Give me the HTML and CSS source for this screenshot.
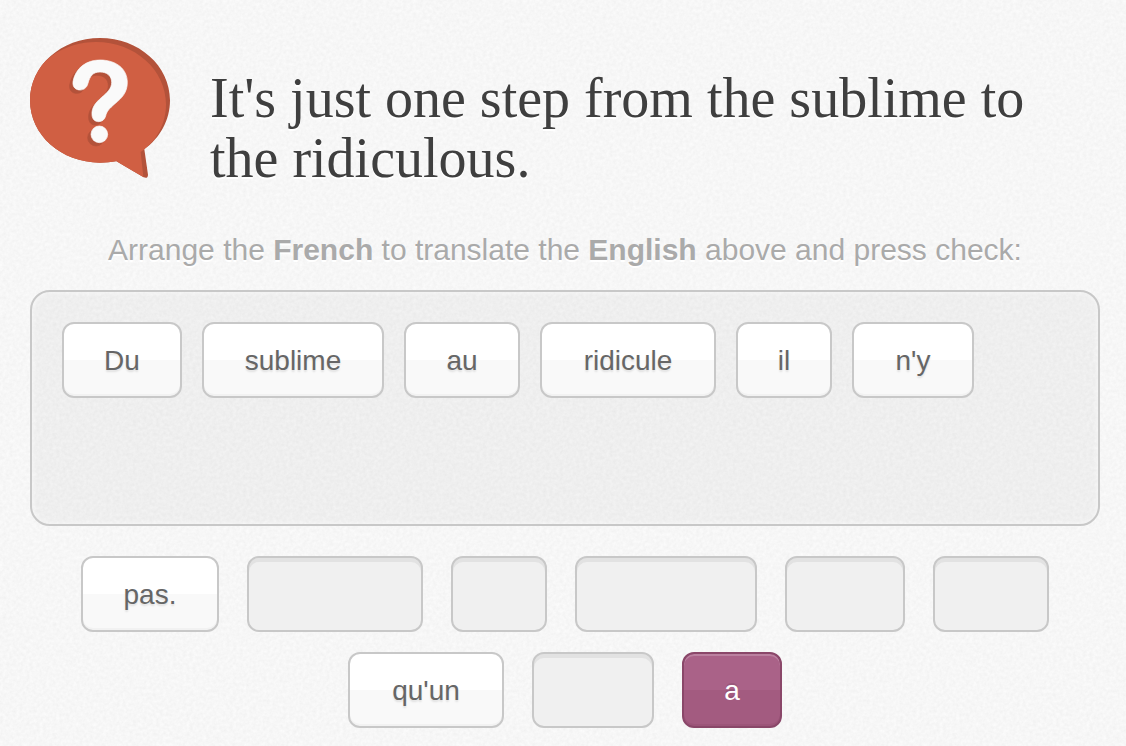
FILE: index.html
```html
<!DOCTYPE html>
<html lang="en">

<head>
    <meta charset="UTF-8">
    <meta name="viewport" content="width=device-width, initial-scale=1.0">
    <title>Translate the sentence</title>
    <link rel="stylesheet" href="styles.css">
</head>

<body>
    <main class="exercise">
        <header class="question">
            <svg class="question-icon" viewBox="30 39 420 420" aria-hidden="true">
                <defs>
                    <clipPath id="bubble">
                        <path d="M240 39C124 39 30 122 30 226C30 331 124 413 240 413Q266 413 289 409L371 457Q384 462 384 449L373 373C420 339 450 286 450 226C450 122 356 39 240 39Z" />
                    </clipPath>
                    <g id="mark" stroke-width="2">
                        <path d="M159 170C166 130 198 105 240 105C290 105 322 133 322 172C322 202 306 219 285 236C268 251 260 259 257 273C254 284 246 290 236 290C225 290 217 283 216 270C214 247 228 232 245 217C262 203 275 190 275 172C275 153 261 141 240 141C220 141 210 152 204 175C200 190 190 195 180 195C168 195 157 187 159 170Z" />
                        <circle cx="238" cy="328" r="25" />
                    </g>
                </defs>
                <g clip-path="url(#bubble)">
                    <rect x="30" y="39" width="420" height="420" fill="#b3523a" />
                    <path d="M228 51C112 51 18 134 18 238C18 343 124 425 240 425L289 409L371 465L362 381C408 351 438 298 438 238C438 134 344 51 228 51Z" fill="#d05f43" />
                </g>
                <use href="#mark" x="-10" y="10" fill="#b3523a" stroke="#b3523a" />
                <use href="#mark" fill="#fafafa" stroke="#fafafa" />
            </svg>
            <h1>It's just one step from the sublime to the ridiculous.</h1>
        </header>

        <p class="hint">Arrange the <strong>French</strong> to translate the <strong>English</strong> above and press check:</p>

        <div class="answer">
            <button type="button" class="tile size-du">Du</button>
            <button type="button" class="tile size-sublime">sublime</button>
            <button type="button" class="tile size-au">au</button>
            <button type="button" class="tile size-ridicule">ridicule</button>
            <button type="button" class="tile size-il">il</button>
            <button type="button" class="tile size-ny">n'y</button>
        </div>

        <!-- used words leave an empty slot behind -->
        <div class="bank">
            <button type="button" class="tile size-pas">pas.</button>
            <div class="slot size-ridicule"></div>
            <div class="slot size-il"></div>
            <div class="slot size-sublime"></div>
            <div class="slot size-du"></div>
            <div class="slot size-au"></div>
            <button type="button" class="tile size-quun">qu'un</button>
            <div class="slot size-ny"></div>
            <button type="button" class="tile active size-a">a</button>
        </div>
    </main>
</body>

</html>
```
FILE: styles.css
```css
* {
    box-sizing: border-box;
}

/* paper grain */
body {
    margin: 0;
    font-family: "Liberation Sans", Arial, sans-serif;
    background-color: #f7f7f7;
    background-image: url("data:image/svg+xml,%3Csvg xmlns='http://www.w3.org/2000/svg' width='300' height='300'%3E%3Cfilter id='n' x='0' y='0' width='100%25' height='100%25' color-interpolation-filters='sRGB'%3E%3CfeTurbulence type='fractalNoise' baseFrequency='0.3' numOctaves='3' stitchTiles='stitch'/%3E%3CfeColorMatrix values='0.05 0 0 0 0.942 0.05 0 0 0 0.942 0.05 0 0 0 0.942 0 0 0 0 1'/%3E%3C/filter%3E%3Crect width='300' height='300' filter='url(%23n)'/%3E%3C/svg%3E");
}

.exercise {
    padding: 38px 26px 18px 30px;
}

.question {
    display: flex;
    align-items: flex-start;
    gap: 40px;
}

.question-icon {
    flex: none;
    width: 140px;
    height: 140px;
}

h1 {
    margin: 0;
    padding-top: 30px;
    font-family: "Liberation Serif", "Times New Roman", serif;
    font-size: 56px;
    font-weight: normal;
    line-height: 60px;
    color: #3f3f3f;
    text-shadow: 0 2px 0 #fff;
}

.hint {
    margin: 42px 0 20px;
    font-size: 30px;
    line-height: 40px;
    text-align: center;
    color: #aaa;
    text-shadow: 0 2px 0 #fff;
}

.answer {
    display: flex;
    flex-wrap: wrap;
    align-content: flex-start;
    gap: 20px;
    min-height: 236px;
    padding: 30px;
    border: 2px solid #c8c8c8;
    border-radius: 20px;
    background-color: rgba(0, 0, 0, 0.03);
    box-shadow: inset 0 0 4px 2px rgba(255, 255, 255, 0.4);
}

.bank {
    display: flex;
    flex-wrap: wrap;
    justify-content: center;
    gap: 20px 28px;
    margin-top: 30px;
}

.tile,
.slot {
    height: 76px;
    border: 2px solid #c8c8c8;
    border-radius: 12px;
}

.tile {
    padding: 2px 0 0;
    font-family: inherit;
    font-size: 28px;
    line-height: 32px;
    color: #666;
    text-shadow: 0 2px 2px rgba(0, 0, 0, 0.1);
    background: linear-gradient(#fff 50%, #f9f9f9 50%);
    box-shadow: inset 0 -2px 0 #f2f2f2;
    cursor: pointer;
}

.tile.active {
    color: #fff;
    border-color: #8a4769;
    text-shadow: 0 -2px 0 rgba(0, 0, 0, 0.1);
    background: linear-gradient(#aa6288 50%, #a35b80 50%);
    box-shadow: inset 0 2px 0 #bb81a0, inset 0 -2px 0 #9c5579;
}

.slot {
    background-color: #f0f0f0;
    box-shadow: inset 0 4px 0 #e2e2e2;
}

/* a word and its slot share one width */
.size-a {
    width: 100px;
}

.size-il {
    width: 96px;
}

.size-au {
    width: 116px;
}

.size-du {
    width: 120px;
}

.size-ny {
    width: 122px;
}

.size-pas {
    width: 138px;
}

.size-quun {
    width: 156px;
}

.size-ridicule {
    width: 176px;
}

.size-sublime {
    width: 182px;
}
```
